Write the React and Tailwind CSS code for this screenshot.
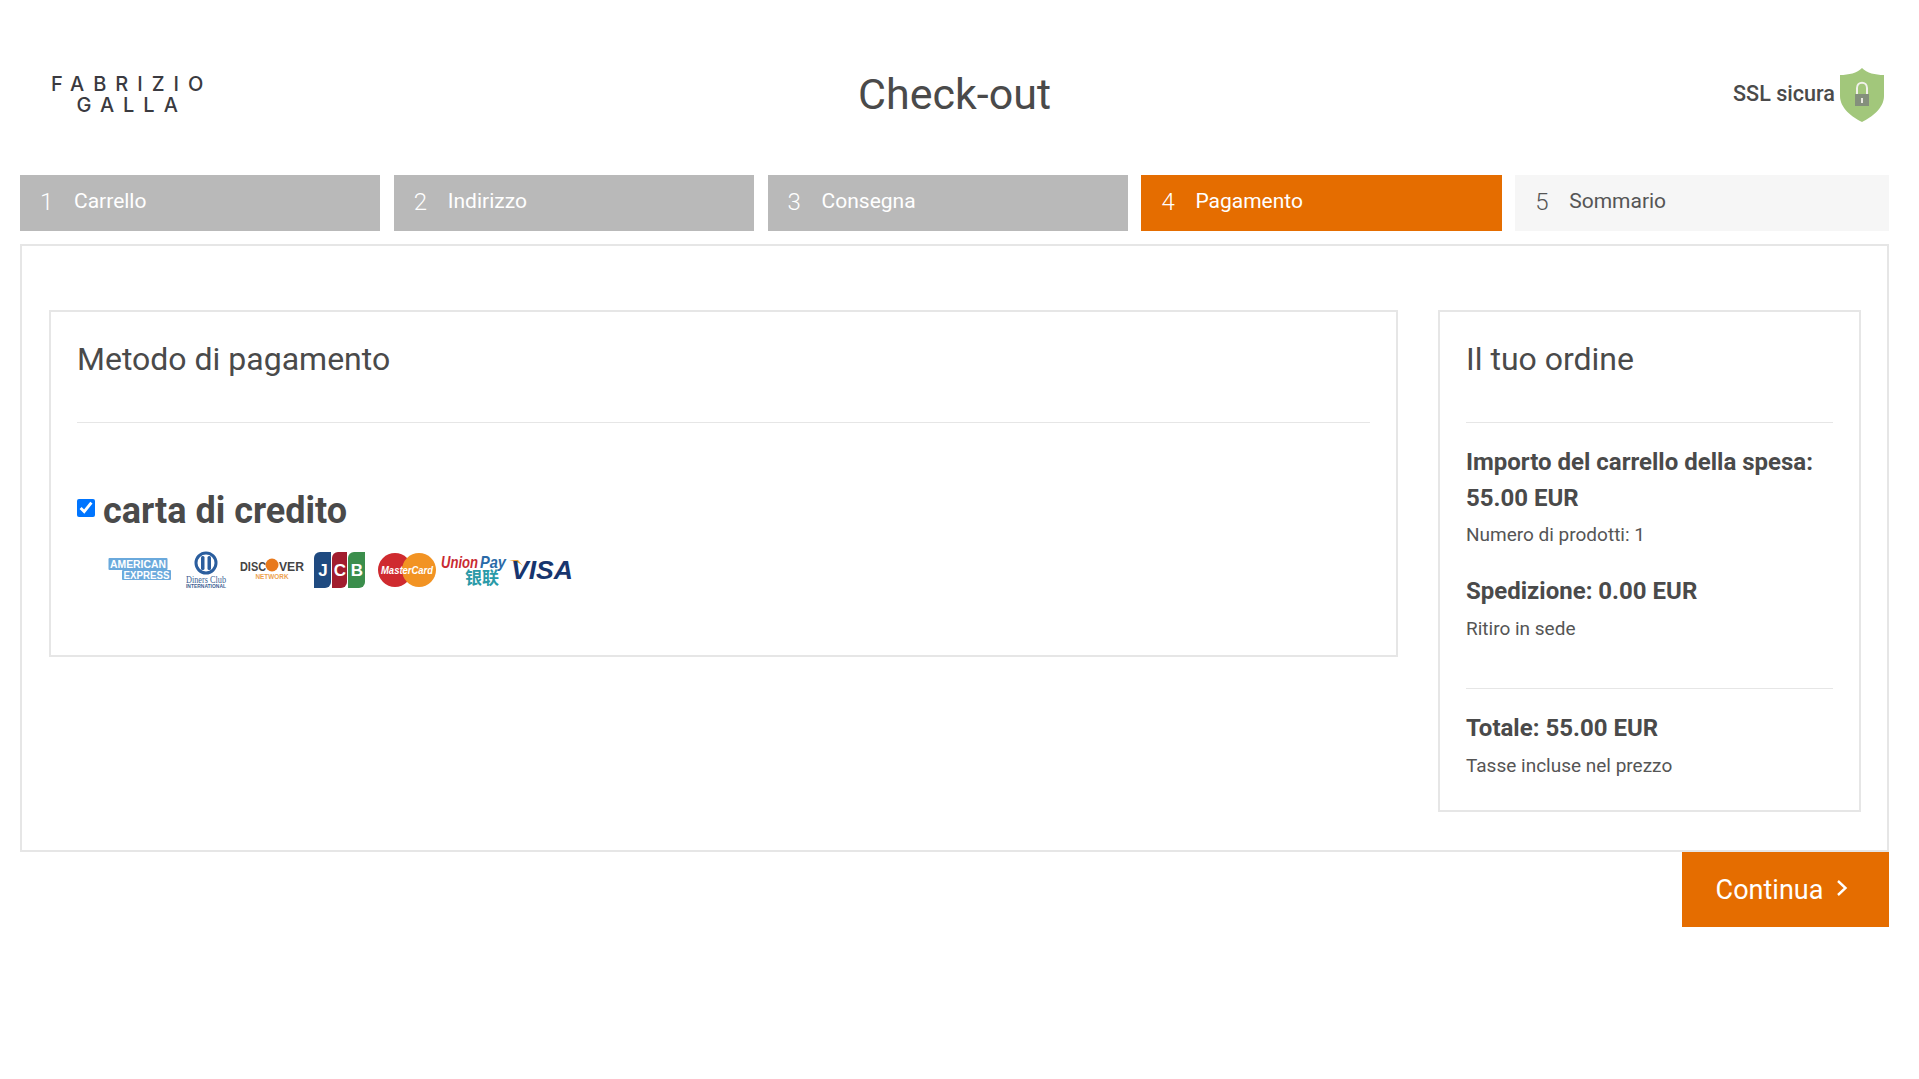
import React from "react";

const steps = [
  ["1", "Carrello", "mr-[13.5px] bg-[#b9b9b9] text-white"],
  ["2", "Indirizzo", "mr-[13.5px] bg-[#b9b9b9] text-white"],
  ["3", "Consegna", "mr-[13.5px] bg-[#b9b9b9] text-white"],
  ["4", "Pagamento", "mr-[13.5px] bg-[#e56d00] text-white"],
  ["5", "Sommario", "bg-[#f6f6f6] text-[#555]"],
];

function Shield() {
  return (
    <svg width="44" height="54" viewBox="0 0 44 54">
      <path d="M22 0 C27 5 35 7 44 7 V28 C44 40 32 49 22 54 C12 49 0 40 0 28 V7 C9 7 17 5 22 0Z" fill="#a2c77b" />
      <path d="M17 26 V20 C17 13 27 13 27 20 V26" fill="none" stroke="#f1f1ea" strokeWidth="2" />
      <rect x="15" y="26" width="14" height="12" fill="#84907c" />
      <rect x="21" y="30" width="2" height="5" fill="#e8e8e0" />
    </svg>
  );
}

function Cards() {
  return (
    <svg width="470" height="44" viewBox="0 0 470 44" className="block">
      {/* American Express */}
      <g fontFamily="Liberation Sans, sans-serif" fontWeight="700">
        <rect x="1.5" y="10" width="59" height="12" rx="1" fill="#6aa9dc" />
        <rect x="15" y="22" width="49" height="10" rx="1" fill="#6aa9dc" />
        <text x="31" y="19.5" textAnchor="middle" fontSize="10" fill="#fff" textLength="56" lengthAdjust="spacingAndGlyphs">AMERICAN</text>
        <text x="39.5" y="30.5" textAnchor="middle" fontSize="10" fill="#fff" textLength="46" lengthAdjust="spacingAndGlyphs">EXPRESS</text>
      </g>
      {/* Diners */}
      <circle cx="99" cy="15" r="10" fill="#fff" stroke="#2b5e9e" strokeWidth="3" />
      <rect x="94" y="8" width="3.5" height="14" rx="1.5" fill="#2b5e9e" />
      <rect x="100.5" y="8" width="3.5" height="14" rx="1.5" fill="#2b5e9e" />
      <text x="99" y="35" textAnchor="middle" fontSize="10" fontFamily="Liberation Serif, serif" fill="#3e5f93" textLength="40" lengthAdjust="spacingAndGlyphs">Diners Club</text>
      <text x="99" y="40" textAnchor="middle" fontSize="5" fontFamily="Liberation Sans, sans-serif" fontWeight="700" fill="#3e5f93" textLength="40" lengthAdjust="spacingAndGlyphs">INTERNATIONAL</text>
      {/* Discover */}
      <g fontFamily="Liberation Sans, sans-serif" fontWeight="700">
        <text x="133" y="22.5" fontSize="13" fill="#444" textLength="26" lengthAdjust="spacingAndGlyphs">DISC</text>
        <circle cx="165" cy="17" r="6.5" fill="#e8791c" />
        <text x="172" y="22.5" fontSize="13" fill="#444" textLength="25" lengthAdjust="spacingAndGlyphs">VER</text>
        <text x="165" y="31" textAnchor="middle" fontSize="7" fill="#eda24e" textLength="33" lengthAdjust="spacingAndGlyphs">NETWORK</text>
      </g>
      {/* JCB */}
      <g fontFamily="Liberation Sans, sans-serif" fontWeight="700" fontSize="17" fill="#fff" textAnchor="middle">
        <path d="M207 10 a6 6 0 0 1 6 -6 h11 v30 a6 6 0 0 1 -6 6 h-11z" fill="#1f4a80" />
        <path d="M225 10 a6 6 0 0 1 6 -6 h9 v30 a6 6 0 0 1 -6 6 h-9z" fill="#a11d2e" />
        <path d="M241 10 a6 6 0 0 1 6 -6 h11 v30 a6 6 0 0 1 -6 6 h-11z" fill="#3b8e4c" />
        <text x="216" y="28">J</text>
        <text x="233" y="28">C</text>
        <text x="250" y="28">B</text>
      </g>
      {/* MasterCard */}
      <circle cx="288" cy="22" r="17" fill="#cf2a2f" />
      <circle cx="312" cy="22" r="17" fill="#f29323" />
      <text x="300" y="26" textAnchor="middle" fontSize="11" fontStyle="italic" fontWeight="700" fontFamily="Liberation Sans, sans-serif" fill="#fff" textLength="52" lengthAdjust="spacingAndGlyphs">MasterCard</text>
      {/* UnionPay */}
      <text x="334" y="20" fontSize="17" fontStyle="italic" fontWeight="700" fontFamily="Liberation Sans, sans-serif" fill="#c92a32" textLength="37" lengthAdjust="spacingAndGlyphs">Union</text>
      <text x="373" y="20" fontSize="17" fontStyle="italic" fontWeight="700" fontFamily="Liberation Sans, sans-serif" fill="#2a6aa8" textLength="26" lengthAdjust="spacingAndGlyphs">Pay</text>
      <text x="358" y="36" fontSize="17" fontWeight="700" fontFamily="Noto Sans CJK SC, sans-serif" fill="#2a9aa8" textLength="34" lengthAdjust="spacingAndGlyphs">银联</text>
      {/* Visa */}
      <path d="M402 12 h9 l5 6 c-3 -3 -8 -5 -14 -6z" fill="#eda23a" />
      <text x="404" y="31" fontSize="26" fontStyle="italic" fontWeight="700" fontFamily="Liberation Sans, sans-serif" fill="#17356e" textLength="62" lengthAdjust="spacingAndGlyphs">VISA</text>
    </svg>
  );
}

export default function App() {
  return (
    <div className="min-h-[1079px] bg-white pl-5 pr-[30px] font-['Roboto',sans-serif] text-[#4a4a4a]">
      <header className="relative flex h-[175px] items-center justify-between pt-[15px]">
        <div className="pl-[31px] text-center font-['Inter',sans-serif] text-[20px] leading-[21px] font-medium tracking-[0.45em] text-[#3a3a40]">
          FABRIZIO
          <br />
          GALLA
        </div>
        <h1 className="absolute left-[0] right-[0] top-[70px] text-center text-[43px] leading-[48px] font-normal text-[#4a4a4a]">Check-out</h1>
        <div className="flex items-center gap-[5px] pr-[5px]">
          <span className="mb-[2px] text-[21.6px] font-medium">SSL sicura</span>
          <Shield />
        </div>
      </header>

      <nav className="grid grid-cols-5">
        {steps.map(([n, label, cls]) => (
          <div key={n} className={`flex h-[56px] items-center pb-[2px] pl-[20px] text-[21px] ${cls}`}>
            <span className="w-[34px] text-[24px] font-light">{n}</span>
            <span>{label}</span>
          </div>
        ))}
      </nav>

      <main className="mt-[13px] flex h-[608px] items-start justify-between border-2 border-[#e6e6e6] pr-[26px] pl-[27px] pt-[64px]">
        <section className="h-[347px] w-[1349px] border-2 border-[#e6e6e6] px-[26px]">
          <h2 className="mt-[28px] text-[32px] leading-[38px] font-normal">Metodo di pagamento</h2>
          <hr className="mt-[44px] border-[#e6e6e6]" />
          <label className="mt-[67px] flex items-center">
            <input type="checkbox" defaultChecked readOnly className="mr-[8px] mb-[7px] h-[18px] w-[18px] accent-[#0075ff]" />
            <span className="text-[36px] leading-[42px] font-bold">carta di credito</span>
          </label>
          <div className="mt-[16px] ml-[30px]">
            <Cards />
          </div>
        </section>
        <aside className="h-[502px] w-[423px] border-2 border-[#e6e6e6] px-[26px]">
          <h2 className="mt-[28px] text-[32px] leading-[38px] font-normal">Il tuo ordine</h2>
          <hr className="mt-[44px] border-[#e6e6e6]" />
          <p className="mt-[21px] text-[24px] leading-[36px] font-bold">
            Importo del carrello della spesa:
            <br />
            55.00 EUR
          </p>
          <p className="mt-[9px] text-[19px] leading-[20px] text-[#555]">Numero di prodotti: 1</p>
          <p className="mt-[28px] text-[24px] leading-[36px] font-bold">Spedizione: 0.00 EUR</p>
          <p className="mt-[10px] text-[19px] leading-[20px] text-[#555]">Ritiro in sede</p>
          <hr className="mt-[49px] border-[#e6e6e6]" />
          <p className="mt-[21px] text-[24px] leading-[36px] font-bold">Totale: 55.00 EUR</p>
          <p className="mt-[10px] text-[19px] leading-[20px] text-[#555]">Tasse incluse nel prezzo</p>
        </aside>
      </main>

      <div className="flex justify-end">
        <button className="flex h-[75px] w-[207px] items-center justify-center gap-[13px] bg-[#e56d00] pt-[2px] pr-[7px] text-[27px] text-white">
          Continua
          <svg width="12" height="18" viewBox="0 0 12 18" fill="none" stroke="#fff" strokeWidth="2.4" className="mb-[6px]">
            <path d="M2 2 L9.5 9 L2 16" />
          </svg>
        </button>
      </div>
    </div>
  );
}
